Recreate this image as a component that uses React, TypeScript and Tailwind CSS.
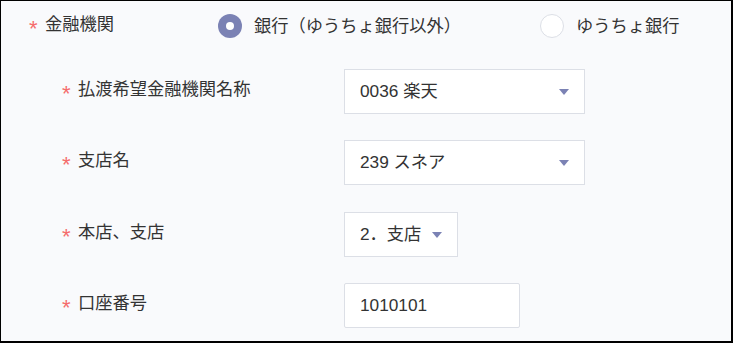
import React from 'react';

const FONT = '"Liberation Sans", "Noto Sans CJK JP", sans-serif';

function Caret() {
  return (
    <svg width="10" height="6" viewBox="0 0 10 6" className="shrink-0">
      <path d="M0 0h10L5 6z" fill="#7b82b4" />
    </svg>
  );
}

function Label({ text }: { text: string }) {
  return (
    <div className="flex items-center mb-[3px]">
      <span className="w-[16px] text-[#f56c6c] text-[22px] leading-none translate-y-[4px]">*</span>
      <span>{text}</span>
    </div>
  );
}

function Radio({ checked, label }: { checked: boolean; label: string }) {
  return (
    <label className="flex items-center gap-[12px]">
      <span
        className={`flex h-[24px] w-[24px] items-center justify-center rounded-full ${
          checked ? 'bg-[#7b82b4]' : 'border border-[#dcdfe6] bg-white'
        }`}
      >
        {checked && <span className="h-[8px] w-[8px] rounded-full bg-white" />}
      </span>
      <span className="mt-[1px]">{label}</span>
    </label>
  );
}

function SelectBox({ value, width }: { value: string; width: string }) {
  return (
    <div className={`flex h-[45px] ${width} items-center justify-between border border-[#dcdfe6] bg-white px-[15px]`}>
      <span>{value}</span>
      <Caret />
    </div>
  );
}

const rows = [
  { label: '払渡希望金融機関名称', value: '0036 楽天', width: 'w-[241px]', select: true, mt: 'mt-[31px]' },
  { label: '支店名', value: '239 スネア', width: 'w-[241px]', select: true, mt: 'mt-[26px]' },
  { label: '本店、支店', value: '2．支店', width: 'w-[114px]', select: true, mt: 'mt-[27px]' },
  { label: '口座番号', value: '1010101', width: 'w-[176px]', select: false, mt: 'mt-[26px]' },
];

export default function App() {
  return (
    <div
      className="h-[343px] w-[733px] overflow-hidden border-l border-t border-r-2 border-b-2 border-black bg-[#f9fafc] text-[17.25px] text-[#333]"
      style={{ fontFamily: FONT }}
    >
      <div className="mt-[13px] flex h-[24px] items-center">
        <div className="w-[217px] pl-[28px]">
          <Label text="金融機関" />
        </div>
        <div className="flex items-center gap-[79px]">
          <Radio checked label="銀行（ゆうちょ銀行以外）" />
          <Radio checked={false} label="ゆうちょ銀行" />
        </div>
      </div>

      {rows.map((row) => (
        <div key={row.label} className={`flex items-center ${row.mt}`}>
          <div className="w-[343px] pl-[61px]">
            <Label text={row.label} />
          </div>
          {row.select ? (
            <SelectBox value={row.value} width={row.width} />
          ) : (
            <div className={`flex h-[45px] ${row.width} items-center rounded-[2px] border border-[#dcdfe6] bg-white px-[15px]`}>
              {row.value}
            </div>
          )}
        </div>
      ))}
    </div>
  );
}
